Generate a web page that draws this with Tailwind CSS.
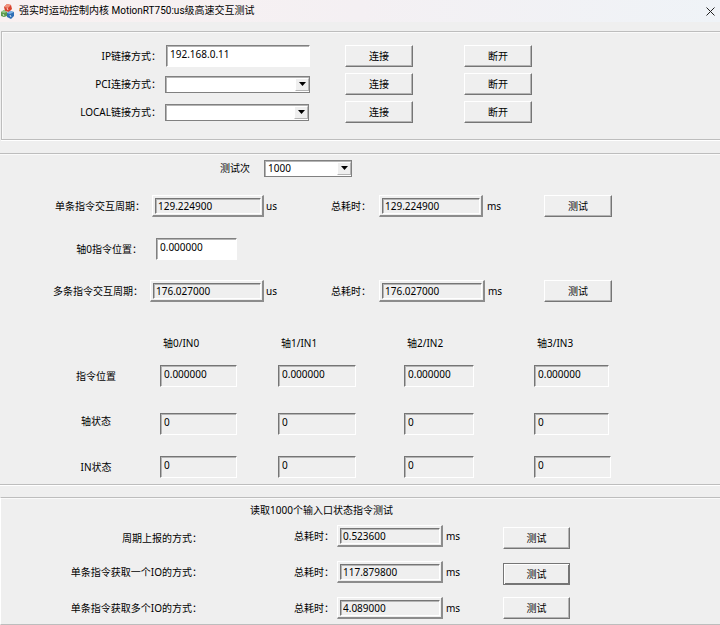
<!DOCTYPE html>
<html lang="zh-CN">
<head>
    <meta charset="UTF-8">
    <meta name="viewport" content="width=device-width, initial-scale=1.0">
    <title>强实时运动控制内核 MotionRT750:us级高速交互测试</title>
    <script src="https://cdn.jsdelivr.net/npm/@tailwindcss/browser@4"></script>
</head>
<body class="bg-[#efefef] font-['Noto_Sans','Noto_Sans_CJK_SC',sans-serif] text-[10px] leading-[22px] text-black">

    <!-- Title bar -->
    <header class="flex h-[22px] items-center justify-between bg-linear-to-r from-[#f9f1f1] via-[#f4f0f3] to-[#eff3f7] pr-1">
        <div class="flex items-center gap-1">
            <svg class="h-4 w-[15px]" viewBox="0 0 15 16" aria-hidden="true">
                <path d="M4 4 L7 1 L11 2 L12 6 L9 9 L5 8Z" fill="#d8432f"/>
                <path d="M4 4 L7 1 L11 2 L8 5Z" fill="#f0907a"/>
                <path d="M1 9 L4 7 L7 9 L7 13 L4 14 L1 13Z" fill="#5c9a4c"/>
                <path d="M1 9 L4 7 L7 9 L4 10Z" fill="#9ac98a"/>
                <path d="M7 10 L10 8 L14 9 L14 13 L11 16 L7 14Z" fill="#2f6fb5"/>
                <path d="M7 10 L10 8 L14 9 L10 11Z" fill="#7db4e6"/>
                <path d="M3 11 L4 13 M7 5 L8 7 M10 12 L11 14" stroke="#fff" stroke-width=".8"/>
            </svg>
            <h1 class="font-['Roboto','Noto_Sans_CJK_SC',sans-serif] leading-[18px]">强实时运动控制内核 MotionRT750:us级高速交互测试</h1>
        </div>
        <button type="button" aria-label="关闭" class="flex size-3 items-center justify-center">
            <svg class="size-[9px]" viewBox="0 0 9 9" fill="none" stroke="#222" aria-hidden="true"><path d="M.5 .5 L8.500 8.500 M8.500 .5 L.5 8.500"/></svg>
        </button>
    </header>

    <main>
        <!-- Connection -->
        <section class="mt-[9px] ml-px border border-r-0 border-[#bdbdbd] pt-[13px] pb-4 shadow-[inset_1px_1px_0_#fafafa,0_1px_0_#fff]">
            <div class="grid grid-cols-[159px_144px_68px_68px] gap-y-1.5">
                <label for="ip" class="text-right">IP链接方式：</label>
                <input id="ip" type="text" value="192.168.0.11" class="ml-[5px] h-[22px] w-36 border border-t-[#808080] border-r-white border-b-white border-l-[#808080] bg-white pb-1 pl-[3px] shadow-[inset_1px_1px_0_#b4b4b4]">
                <button type="button" class="ml-10 h-[22px] w-[68px] border border-t-white border-r-[#757575] border-b-[#757575] border-l-white leading-[18px] shadow-[inset_-1px_-1px_0_#b4b4b4]">连接</button>
                <button type="button" class="ml-[91px] h-[22px] w-[68px] border border-t-white border-r-[#757575] border-b-[#757575] border-l-white leading-[18px] shadow-[inset_-1px_-1px_0_#b4b4b4]">断开</button>

                <label for="pci" class="text-right">PCI连接方式：</label>
                <div class="relative ml-1 h-[17px] w-[145px] self-center">
                    <select id="pci" class="block h-[17px] w-full appearance-none border border-[#808080] bg-white pr-4 pl-1 leading-[15px] shadow-[inset_1px_1px_0_#b4b4b4]">
                        <option></option>
                    </select>
                    <span class="pointer-events-none absolute inset-y-0.5 right-px flex w-3.5 items-center justify-center border border-t-white border-r-[#b4b4b4] border-b-[#b4b4b4] border-l-white bg-[#efefef]">
                        <svg class="h-1 w-[7px]" viewBox="0 0 7 4" aria-hidden="true"><path d="M0 0 H7 L3.500 4Z"/></svg>
                    </span>
                </div>
                <button type="button" class="ml-10 h-[22px] w-[68px] border border-t-white border-r-[#757575] border-b-[#757575] border-l-white leading-[18px] shadow-[inset_-1px_-1px_0_#b4b4b4]">连接</button>
                <button type="button" class="ml-[91px] h-[22px] w-[68px] border border-t-white border-r-[#757575] border-b-[#757575] border-l-white leading-[18px] shadow-[inset_-1px_-1px_0_#b4b4b4]">断开</button>

                <label for="local" class="text-right">LOCAL链接方式：</label>
                <div class="relative ml-1 h-[17px] w-36 self-center">
                    <select id="local" class="block h-[17px] w-full appearance-none border border-[#808080] bg-white pr-4 pl-1 leading-[15px] shadow-[inset_1px_1px_0_#b4b4b4]">
                        <option></option>
                    </select>
                    <span class="pointer-events-none absolute inset-y-0.5 right-px flex w-3.5 items-center justify-center border border-t-white border-r-[#b4b4b4] border-b-[#b4b4b4] border-l-white bg-[#efefef]">
                        <svg class="h-1 w-[7px]" viewBox="0 0 7 4" aria-hidden="true"><path d="M0 0 H7 L3.500 4Z"/></svg>
                    </span>
                </div>
                <button type="button" class="ml-10 h-[22px] w-[68px] border border-t-white border-r-[#757575] border-b-[#757575] border-l-white leading-[18px] shadow-[inset_-1px_-1px_0_#b4b4b4]">连接</button>
                <button type="button" class="ml-[91px] h-[22px] w-[68px] border border-t-white border-r-[#757575] border-b-[#757575] border-l-white leading-[18px] shadow-[inset_-1px_-1px_0_#b4b4b4]">断开</button>
            </div>
        </section>

        <!-- Command cycle test -->
        <section class="mt-[13px] border-y border-[#bdbdbd] pt-[3px] pb-1.5 shadow-[inset_0_1px_0_#fafafa,0_1px_0_#fff]">
            <div class="flex items-center gap-3.5 pl-[220px]">
                <label for="times">测试次</label>
                <div class="relative h-[17px] w-22">
                    <select id="times" class="block h-[17px] w-full appearance-none border border-[#808080] bg-white pr-4 pl-[3px] leading-[15px] shadow-[inset_1px_1px_0_#b4b4b4]">
                        <option>1000</option>
                    </select>
                    <span class="pointer-events-none absolute inset-y-0.5 right-px flex w-3.5 items-center justify-center border border-t-white border-r-[#b4b4b4] border-b-[#b4b4b4] border-l-white bg-[#efefef]">
                        <svg class="h-1 w-[7px]" viewBox="0 0 7 4" aria-hidden="true"><path d="M0 0 H7 L3.500 4Z"/></svg>
                    </span>
                </div>
            </div>

            <div class="mt-4 grid grid-cols-[264px_67px_48px_165px_68px]">
                <div class="flex justify-end gap-[7px]">
                    <label for="single">单条指令交互周期：</label>
                    <div class="h-[22px] w-28 border border-t-white border-r-2 border-r-[#8c8c8c] border-b-2 border-b-[#8c8c8c] border-l-white p-0.5 pr-px pb-px">
                        <input id="single" type="text" readonly value="129.224900" class="block h-4 w-full border border-t-[#757575] border-r-white border-b-white border-l-[#757575] pb-px pl-0.5 shadow-[inset_1px_1px_0_#b4b4b4]">
                    </div>
                </div>
                <span class="pl-0.5">us</span>
                <label for="single-total">总耗时：</label>
                <div class="flex gap-1">
                    <div class="h-[22px] w-26 border border-t-white border-r-2 border-r-[#8c8c8c] border-b-2 border-b-[#8c8c8c] border-l-white p-0.5 pr-px pb-px">
                        <input id="single-total" type="text" readonly value="129.224900" class="block h-4 w-full border border-t-[#757575] border-r-white border-b-white border-l-[#757575] pb-px pl-0.5 shadow-[inset_1px_1px_0_#b4b4b4]">
                    </div>
                    <span>ms</span>
                </div>
                <button type="button" class="h-[22px] border border-t-white border-r-[#757575] border-b-[#757575] border-l-white leading-[18px] shadow-[inset_-1px_-1px_0_#b4b4b4]">测试</button>
            </div>

            <div class="mt-[21px] flex gap-3.5">
                <label for="axis0" class="w-[142px] text-right">轴0指令位置：</label>
                <input id="axis0" type="text" value="0.000000" class="h-[22px] w-[81px] border border-t-[#808080] border-r-white border-b-white border-l-[#808080] bg-white pb-1 pl-[3px] shadow-[inset_1px_1px_0_#b4b4b4]">
            </div>

            <div class="mt-5 grid grid-cols-[264px_67px_48px_165px_68px]">
                <div class="flex justify-end gap-[7px]">
                    <label for="multi">多条指令交互周期：</label>
                    <div class="h-[22px] w-[114px] border border-t-white border-r-2 border-r-[#8c8c8c] border-b-2 border-b-[#8c8c8c] border-l-white p-0.5 pr-px pb-px">
                        <input id="multi" type="text" readonly value="176.027000" class="block h-4 w-full border border-t-[#757575] border-r-white border-b-white border-l-[#757575] pb-px pl-0.5 shadow-[inset_1px_1px_0_#b4b4b4]">
                    </div>
                </div>
                <span class="pl-0.5">us</span>
                <label for="multi-total">总耗时：</label>
                <div class="flex gap-[3px]">
                    <div class="h-[22px] w-[106px] border border-t-white border-r-2 border-r-[#8c8c8c] border-b-2 border-b-[#8c8c8c] border-l-white p-0.5 pr-px pb-px">
                        <input id="multi-total" type="text" readonly value="176.027000" class="block h-4 w-full border border-t-[#757575] border-r-white border-b-white border-l-[#757575] pb-px pl-0.5 shadow-[inset_1px_1px_0_#b4b4b4]">
                    </div>
                    <span>ms</span>
                </div>
                <button type="button" class="h-[22px] border border-t-white border-r-[#757575] border-b-[#757575] border-l-white leading-[18px] shadow-[inset_-1px_-1px_0_#b4b4b4]">测试</button>
            </div>

            <!-- Axis / IN state -->
            <table class="mt-[30px] w-full table-fixed">
                <colgroup>
                    <col class="w-40">
                    <col class="w-[118px]">
                    <col class="w-[126px]">
                    <col class="w-[130px]">
                    <col>
                </colgroup>
                <thead>
                    <tr class="h-[33px] text-left align-top">
                        <td></td>
                        <th scope="col" class="pl-[3px] font-normal">轴0/IN0</th>
                        <th scope="col" class="pl-[3px] font-normal">轴1/IN1</th>
                        <th scope="col" class="pl-[3px] font-normal">轴2/IN2</th>
                        <th scope="col" class="pl-[3px] font-normal">轴3/IN3</th>
                    </tr>
                </thead>
                <tbody>
                    <tr class="h-12 align-top">
                        <th scope="row" class="pl-8 font-normal">指令位置</th>
                        <td><input type="text" readonly value="0.000000" aria-label="轴0 指令位置" class="block h-[22px] w-[77px] border border-t-[#757575] border-r-white border-b-white border-l-[#757575] pb-1 pl-[3px] shadow-[inset_1px_1px_0_#b4b4b4]"></td>
                        <td><input type="text" readonly value="0.000000" aria-label="轴1 指令位置" class="block h-[22px] w-[78px] border border-t-[#757575] border-r-white border-b-white border-l-[#757575] pb-1 pl-[3px] shadow-[inset_1px_1px_0_#b4b4b4]"></td>
                        <td><input type="text" readonly value="0.000000" aria-label="轴2 指令位置" class="block h-[22px] w-[70px] border border-t-[#757575] border-r-white border-b-white border-l-[#757575] pb-1 pl-[3px] shadow-[inset_1px_1px_0_#b4b4b4]"></td>
                        <td><input type="text" readonly value="0.000000" aria-label="轴3 指令位置" class="block h-[22px] w-[75px] border border-t-[#757575] border-r-white border-b-white border-l-[#757575] pb-1 pl-[3px] shadow-[inset_1px_1px_0_#b4b4b4]"></td>
                    </tr>
                    <tr class="h-[43px] align-top">
                        <th scope="row" class="pl-8 font-normal leading-4">轴状态</th>
                        <td><input type="text" readonly value="0" aria-label="轴0 状态" class="block h-[22px] w-[77px] border border-t-[#757575] border-r-white border-b-white border-l-[#757575] pb-1 pl-[3px] shadow-[inset_1px_1px_0_#b4b4b4]"></td>
                        <td><input type="text" readonly value="0" aria-label="轴1 状态" class="block h-[22px] w-[78px] border border-t-[#757575] border-r-white border-b-white border-l-[#757575] pb-1 pl-[3px] shadow-[inset_1px_1px_0_#b4b4b4]"></td>
                        <td><input type="text" readonly value="0" aria-label="轴2 状态" class="block h-[22px] w-[70px] border border-t-[#757575] border-r-white border-b-white border-l-[#757575] pb-1 pl-[3px] shadow-[inset_1px_1px_0_#b4b4b4]"></td>
                        <td><input type="text" readonly value="0" aria-label="轴3 状态" class="block h-[22px] w-[75px] border border-t-[#757575] border-r-white border-b-white border-l-[#757575] pb-1 pl-[3px] shadow-[inset_1px_1px_0_#b4b4b4]"></td>
                    </tr>
                    <tr class="align-top">
                        <th scope="row" class="pl-8 font-normal">IN状态</th>
                        <td><input type="text" readonly value="0" aria-label="IN0 状态" class="block h-[22px] w-[77px] border border-t-[#757575] border-r-white border-b-white border-l-[#757575] pb-1 pl-[3px] shadow-[inset_1px_1px_0_#b4b4b4]"></td>
                        <td><input type="text" readonly value="0" aria-label="IN1 状态" class="block h-[22px] w-[78px] border border-t-[#757575] border-r-white border-b-white border-l-[#757575] pb-1 pl-[3px] shadow-[inset_1px_1px_0_#b4b4b4]"></td>
                        <td><input type="text" readonly value="0" aria-label="IN2 状态" class="block h-[22px] w-[70px] border border-t-[#757575] border-r-white border-b-white border-l-[#757575] pb-1 pl-[3px] shadow-[inset_1px_1px_0_#b4b4b4]"></td>
                        <td><input type="text" readonly value="0" aria-label="IN3 状态" class="block h-[22px] w-[77px] border border-t-[#757575] border-r-white border-b-white border-l-[#757575] pb-1 pl-[3px] shadow-[inset_1px_1px_0_#b4b4b4]"></td>
                    </tr>
                </tbody>
            </table>
        </section>

        <!-- 1000 inputs read test -->
        <section class="mt-3 border border-r-0 border-[#bdbdbd] border-l-white pt-px pb-[5px] shadow-[inset_0_1px_0_#fafafa]">
            <h2 class="pl-[249px]">读取1000个输入口状态指令测试</h2>
            <div class="mt-1 grid grid-cols-[201px_135px_166px_67px] grid-rows-[24px_24px_22px] items-start gap-y-3">
                <span class="self-end text-right">周期上报的方式：</span>
                <label for="report" class="pl-[92px]">总耗时：</label>
                <div class="flex gap-[3px]">
                    <div class="h-[22px] w-[106px] border border-t-white border-r-2 border-r-[#8c8c8c] border-b-2 border-b-[#8c8c8c] border-l-white p-0.5 pr-px pb-px">
                        <input id="report" type="text" readonly value="0.523600" class="block h-4 w-full border border-t-[#757575] border-r-white border-b-white border-l-[#757575] pb-px pl-0.5 shadow-[inset_1px_1px_0_#b4b4b4]">
                    </div>
                    <span>ms</span>
                </div>
                <button type="button" class="h-[22px] self-end border border-t-white border-r-[#757575] border-b-[#757575] border-l-white leading-[18px] shadow-[inset_-1px_-1px_0_#b4b4b4]">测试</button>

                <span class="text-right">单条指令获取一个IO的方式：</span>
                <label for="one-io" class="pl-[92px]">总耗时：</label>
                <div class="flex gap-[3px]">
                    <div class="h-[22px] w-[106px] border border-t-white border-r-2 border-r-[#8c8c8c] border-b-2 border-b-[#8c8c8c] border-l-white p-0.5 pr-px pb-px">
                        <input id="one-io" type="text" readonly value="117.879800" class="block h-4 w-full border border-t-[#757575] border-r-white border-b-white border-l-[#757575] pb-px pl-0.5 shadow-[inset_1px_1px_0_#b4b4b4]">
                    </div>
                    <span>ms</span>
                </div>
                <button type="button" class="h-[22px] self-end border border-[#757575] leading-[18px] shadow-[inset_1px_1px_0_#fff,inset_-1px_-1px_0_#757575]">测试</button>

                <span class="text-right">单条指令获取多个IO的方式：</span>
                <label for="many-io" class="pl-[92px]">总耗时：</label>
                <div class="flex gap-[3px]">
                    <div class="h-[22px] w-[106px] border border-t-white border-r-2 border-r-[#8c8c8c] border-b-2 border-b-[#8c8c8c] border-l-white p-0.5 pr-px pb-px">
                        <input id="many-io" type="text" readonly value="4.089000" class="block h-4 w-full border border-t-[#757575] border-r-white border-b-white border-l-[#757575] pb-px pl-0.5 shadow-[inset_1px_1px_0_#b4b4b4]">
                    </div>
                    <span>ms</span>
                </div>
                <button type="button" class="h-[22px] border border-t-white border-r-[#757575] border-b-[#757575] border-l-white leading-[18px] shadow-[inset_-1px_-1px_0_#b4b4b4]">测试</button>
            </div>
        </section>
    </main>
</body>
</html>
